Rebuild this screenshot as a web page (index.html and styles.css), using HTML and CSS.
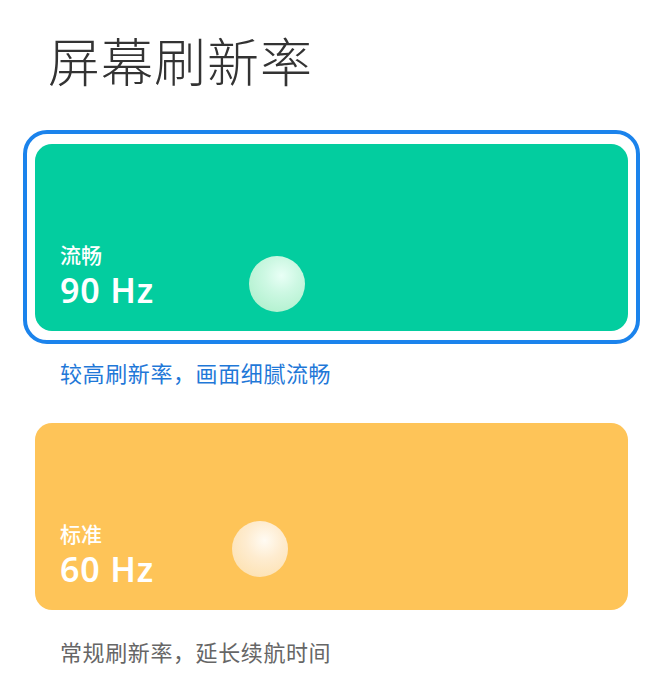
FILE: index.html
```html
<!DOCTYPE html>
<html lang="zh-CN">
<head>
<meta charset="utf-8">
<title>屏幕刷新率</title>
<link rel="stylesheet" href="styles.css">
</head>
<body>
<main class="page">
  <h1 class="title">屏幕刷新率</h1>

  <section class="option option--selected">
    <div class="card card--green">
      <div class="ball ball--green"></div>
      <div class="card-label">流畅</div>
      <div class="card-value">90 Hz</div>
    </div>
  </section>
  <p class="caption caption--active">较高刷新率，画面细腻流畅</p>

  <section class="option">
    <div class="card card--orange">
      <div class="ball ball--orange"></div>
      <div class="card-label">标准</div>
      <div class="card-value">60 Hz</div>
    </div>
  </section>
  <p class="caption">常规刷新率，延长续航时间</p>
</main>
</body>
</html>
```

FILE: styles.css
```css
* { box-sizing: border-box; }

html, body {
  margin: 0;
  padding: 0;
  background: #ffffff;
}

body {
  font-family: "Noto Sans CJK SC", "Noto Sans", sans-serif;
  width: 650px;
  height: 698px;
  overflow: hidden;
}

.page {
  display: flex;
  flex-direction: column;
}

.title {
  margin: 29px 0 0 48px;
  font-size: 52px;
  line-height: 62px;
  font-weight: 300;
  color: #333333;
  letter-spacing: 1px;
}

.option {
  margin: 39px 10px 0 23px;
  width: 617px;
  border: 4px solid transparent;
  border-radius: 24px;
  padding: 10px 8px 9px 8px;
}

.option + .caption + .option {
  margin-top: 22px;
}

.option--selected {
  border-color: #1b83ec;
}

.card {
  position: relative;
  height: 187px;
  border-radius: 17px;
  padding: 96px 0 0 25px;
  color: #ffffff;
}

.card--green { background: #03cd9f; }
.card--orange { background: #fec458; }

.card-label {
  font-size: 21px;
  line-height: 28px;
  font-weight: 500;
}

.card-value {
  margin-top: 2px;
  font-family: "Noto Sans", sans-serif;
  font-size: 34px;
  line-height: 40px;
  font-weight: 600;
  letter-spacing: 0.8px;
}

.ball {
  position: absolute;
  width: 56px;
  height: 56px;
  border-radius: 50%;
}

.ball--green {
  left: 214px;
  top: 112px;
  background: radial-gradient(circle at 58% 35%, #e9fff6 0%, #cdf8e3 35%, #b2f1cf 80%, #a8efc8 100%);
}

.ball--orange {
  left: 197px;
  top: 98px;
  background: radial-gradient(circle at 58% 35%, #fffbf3 0%, #feecd0 38%, #fde2b3 80%, #fcdaa0 100%);
}

.caption {
  margin: 13px 0 0 60px;
  font-size: 22px;
  line-height: 30px;
  letter-spacing: 0.6px;
  color: #666666;
}

.caption--active {
  color: #1f78d8;
}
```
